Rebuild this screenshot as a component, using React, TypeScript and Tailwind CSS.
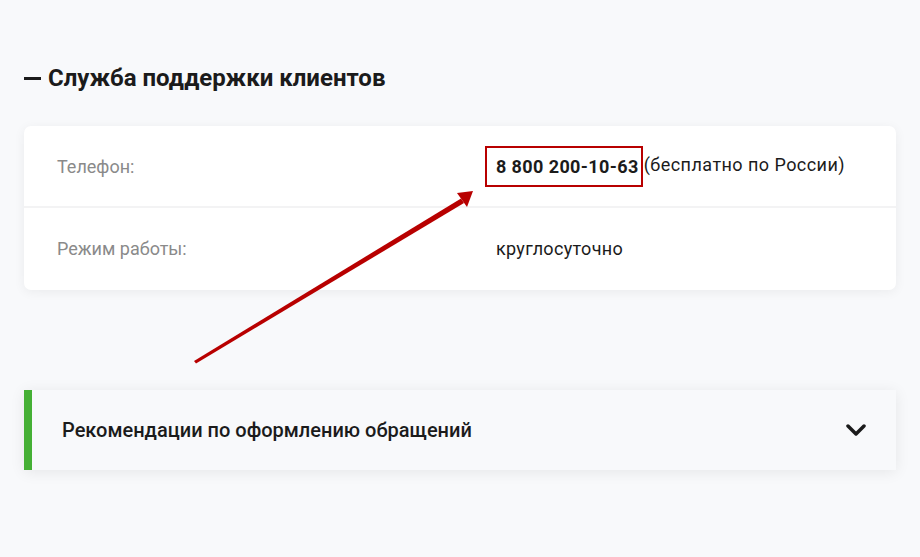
import React from "react";

export default function App() {
  return (
    <div
      className="relative w-[920px] h-[557px] bg-[#f8f9fb] overflow-hidden"
      style={{ fontFamily: "Roboto, 'Noto Sans', sans-serif" }}
    >
      <div className="px-6 pt-[63px]">
        <h2 className="text-[24px] leading-[30px] font-bold text-[#1b1b1b] flex items-center">
          <span className="inline-block w-[17px] h-[3px] bg-[#1b1b1b] mr-[7px]" />
          Служба поддержки клиентов
        </h2>

        <div className="mt-[33px] h-[164px] bg-white rounded-[7px] shadow-[0_2px_12px_rgba(0,0,0,0.06)]">
          <div className="flex items-center h-[82px] border-b-2 border-[#f3f3f4]">
            <div className="w-[472px] pl-[33px] text-[18px] text-[#8a8a8a]">Телефон:</div>
            <div className="flex items-center text-[18px] text-[#1b1b1b]">
              <span className="border-2 border-[#b80000] pl-[9px] pr-[2px] h-[41px] flex items-center font-bold tracking-[0.4px] ml-[-11px]">
                8 800 200-10-63
              </span>
              <span className="ml-[1px] mt-[-4px] tracking-[0.45px]">(бесплатно по России)</span>
            </div>
          </div>
          <div className="flex items-center h-[80px]">
            <div className="w-[472px] pl-[33px] text-[18px] text-[#8a8a8a]">Режим работы:</div>
            <div className="text-[18px] text-[#1b1b1b] tracking-[0.3px]">круглосуточно</div>
          </div>
        </div>

        <div className="mt-[100px] h-[80px] bg-[#f8f9fb] border-l-8 border-[#45b035] shadow-[0_2px_14px_rgba(0,0,0,0.08)] flex items-center justify-between pl-[30px] pr-[30px]">
          <span className="text-[20px] font-medium text-[#1b1b1b]">
            Рекомендации по оформлению обращений
          </span>
          <svg width="20" height="12" viewBox="0 0 20 12">
            <path d="M2 2 L10 10 L18 2" fill="none" stroke="#1b1b1b" strokeWidth="3.5" strokeLinecap="round" strokeLinejoin="round" />
          </svg>
        </div>
      </div>

      <svg className="absolute left-0 top-0 pointer-events-none" width="920" height="557" viewBox="0 0 920 557">
        <polygon points="194,361 196,363.5 464,203 461,198.5" fill="#b80000" />
        <polygon points="473,191 457,193 467,207" fill="#b80000" />
      </svg>
    </div>
  );
}
